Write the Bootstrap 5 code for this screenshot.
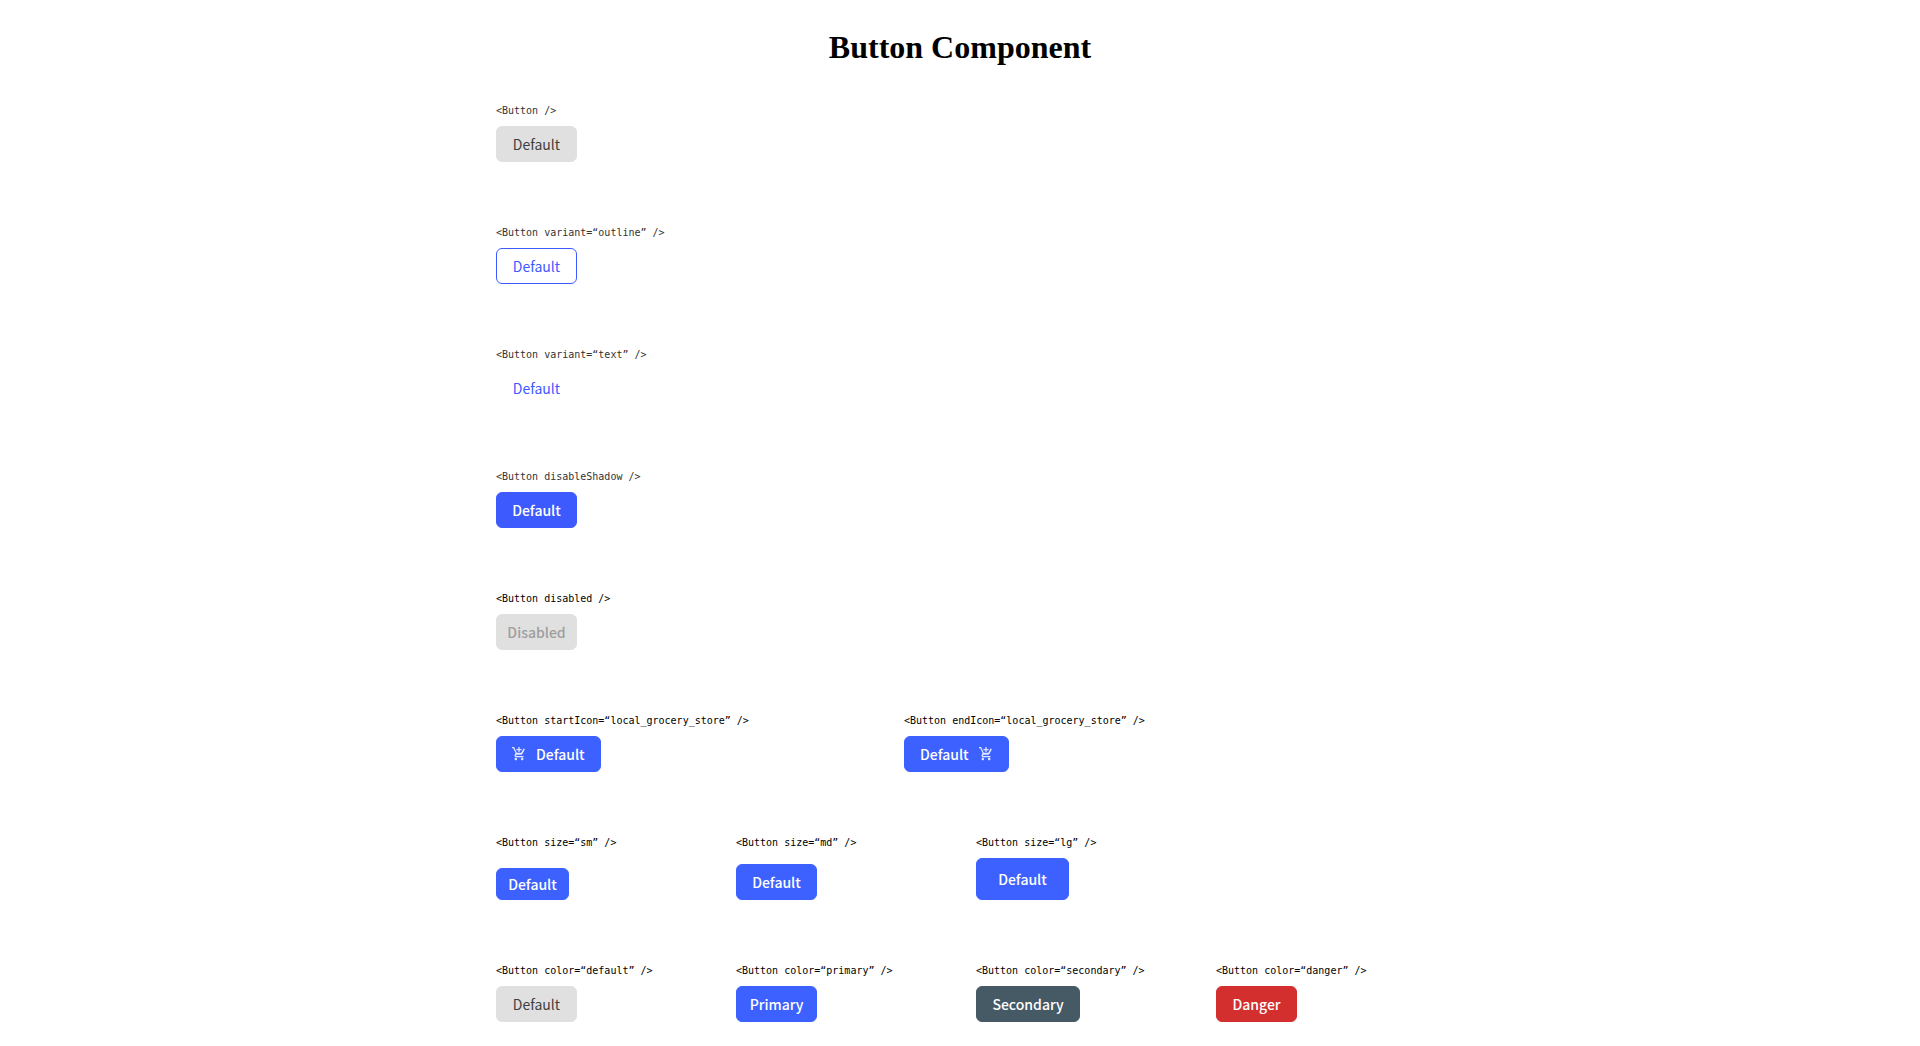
<!DOCTYPE html>
<html lang="en">
<head>
<meta charset="utf-8">
<meta name="viewport" content="width=device-width, initial-scale=1">
<title>Button Component</title>
<link href="https://cdn.jsdelivr.net/npm/bootstrap@5.3.0/dist/css/bootstrap.min.css" rel="stylesheet">
<style>
body { background: #fff; color: #000; }
.page-title { font: 700 32px/36px "Liberation Serif", serif; color: #000; padding: 29px 0 38px; }
.showcase { max-width: 960px; padding: 0 16px 16px; gap: 63px; }
.demo-row { column-gap: 32px; row-gap: 32px; }
.demo { width: 208px; gap: 7px; }
.demo-wide { width: 376px; }
.snippet { font: 10px/16px "DejaVu Sans Mono", monospace; color: #000; white-space: nowrap; }
.snippet-soft { color: #333; }
.ui-btn {
  --bs-btn-font-family: "Noto Sans CJK KR", "Noto Sans CJK JP", sans-serif;
  --bs-btn-font-size: 14px; --bs-btn-font-weight: 400; --bs-btn-line-height: 20px;
  --bs-btn-padding-x: 10px; --bs-btn-padding-y: 7px; --bs-btn-border-radius: 6px;
  --bs-btn-color: #3f3f3f; --bs-btn-bg: #e0e0e0; --bs-btn-border-color: #e0e0e0;
  --bs-btn-hover-color: #3f3f3f; --bs-btn-hover-bg: #aeaeae; --bs-btn-hover-border-color: #aeaeae;
  --bs-btn-disabled-color: #9e9e9e; --bs-btn-disabled-bg: #e0e0e0; --bs-btn-disabled-border-color: #e0e0e0; --bs-btn-disabled-opacity: 1;
  min-width: 81px;
}
.ui-btn:disabled, .ui-flat, .ui-primary, .ui-secondary, .ui-danger { --bs-btn-font-weight: 500; }
.ui-outline { --bs-btn-color: #3d5afe; --bs-btn-bg: #fff; --bs-btn-border-color: #3d5afe; --bs-btn-hover-color: #3d5afe; --bs-btn-hover-bg: #eceffe; }
.ui-text { --bs-btn-color: #3d5afe; --bs-btn-bg: transparent; --bs-btn-border-color: transparent; --bs-btn-hover-color: #3d5afe; --bs-btn-hover-bg: #eceffe; }
.ui-flat { --bs-btn-color: #fff; --bs-btn-bg: #3d5afe; --bs-btn-border-color: #3d5afe; --bs-btn-hover-color: #fff; --bs-btn-hover-bg: #0039cb; }
.ui-primary { --bs-btn-color: #fff; --bs-btn-bg: #3d61ff; --bs-btn-border-color: #3d61ff; --bs-btn-hover-color: #fff; --bs-btn-hover-bg: #0039cb; }
.ui-secondary { --bs-btn-color: #fff; --bs-btn-bg: #455a64; --bs-btn-border-color: #455a64; --bs-btn-hover-color: #fff; --bs-btn-hover-bg: #1c313a; min-width: 104px; }
.ui-danger { --bs-btn-color: #fff; --bs-btn-bg: #d32f2f; --bs-btn-border-color: #d32f2f; --bs-btn-hover-color: #fff; --bs-btn-hover-bg: #9a0007; }
.ui-sm { --bs-btn-padding-y: 5px; min-width: 73px; }
.ui-lg { --bs-btn-padding-y: 10px; min-width: 93px; }
.ui-icon { --bs-btn-padding-x: 15px; gap: 10px; }
.cart { width: 14px; height: 14px; fill: #fff; opacity: .85; }
</style>
<script defer src="https://cdn.jsdelivr.net/npm/bootstrap@5.3.0/dist/js/bootstrap.bundle.min.js"></script>
</head>
<body>
<h1 class="page-title text-center m-0">Button Component</h1>
<main class="showcase d-flex flex-column mx-auto">
  <section class="demo-row d-flex flex-wrap">
    <div class="demo d-flex flex-column align-items-start"><span class="snippet snippet-soft">&lt;Button /&gt;</span><button type="button" class="btn ui-btn">Default</button></div>
  </section>
  <section class="demo-row d-flex flex-wrap">
    <div class="demo d-flex flex-column align-items-start"><span class="snippet snippet-soft">&lt;Button variant=“outline” /&gt;</span><button type="button" class="btn ui-btn ui-outline">Default</button></div>
  </section>
  <section class="demo-row d-flex flex-wrap">
    <div class="demo d-flex flex-column align-items-start"><span class="snippet snippet-soft">&lt;Button variant=“text” /&gt;</span><button type="button" class="btn ui-btn ui-text">Default</button></div>
  </section>
  <section class="demo-row d-flex flex-wrap">
    <div class="demo d-flex flex-column align-items-start"><span class="snippet snippet-soft">&lt;Button disableShadow /&gt;</span><button type="button" class="btn ui-btn ui-flat">Default</button></div>
  </section>
  <section class="demo-row d-flex flex-wrap">
    <div class="demo d-flex flex-column align-items-start"><span class="snippet">&lt;Button disabled /&gt;</span><button type="button" class="btn ui-btn" disabled>Disabled</button></div>
  </section>
  <section class="demo-row d-flex flex-wrap">
    <div class="demo demo-wide d-flex flex-column align-items-start"><span class="snippet">&lt;Button startIcon=“local_grocery_store” /&gt;</span><button type="button" class="btn ui-btn ui-primary ui-icon d-inline-flex align-items-center"><svg class="cart" viewBox="1 1 22 22" aria-hidden="true"><path d="M11 9h2V6h3V4h-3V1h-2v3H8v2h3v3zm-4 9c-1.100 0-1.990.9-1.990 2S5.900 22 7 22s2-.9 2-2-.9-2-2-2zm10 0c-1.100 0-1.990.9-1.990 2s.89 2 1.990 2 2-.9 2-2-.9-2-2-2zm-8.900-5h7.450c.75 0 1.410-.41 1.750-1.030l3.860-7.010L19.420 3l-3.870 7H8.530L4.270 1H1v2h2l3.600 7.590-1.350 2.440C4.520 15.370 5.480 17 7 17h12v-2H7l1.100-2z"/></svg>Default</button></div>
    <div class="demo demo-wide d-flex flex-column align-items-start"><span class="snippet">&lt;Button endIcon=“local_grocery_store” /&gt;</span><button type="button" class="btn ui-btn ui-primary ui-icon d-inline-flex align-items-center">Default<svg class="cart" viewBox="1 1 22 22" aria-hidden="true"><path d="M11 9h2V6h3V4h-3V1h-2v3H8v2h3v3zm-4 9c-1.100 0-1.990.9-1.990 2S5.900 22 7 22s2-.9 2-2-.9-2-2-2zm10 0c-1.100 0-1.990.9-1.990 2s.89 2 1.990 2 2-.9 2-2-.9-2-2-2zm-8.900-5h7.450c.75 0 1.410-.41 1.750-1.030l3.860-7.010L19.420 3l-3.870 7H8.530L4.270 1H1v2h2l3.600 7.590-1.350 2.440C4.520 15.370 5.480 17 7 17h12v-2H7l1.100-2z"/></svg></button></div>
  </section>
  <section class="demo-row d-flex flex-wrap">
    <div class="demo d-flex flex-column align-items-start justify-content-between"><span class="snippet">&lt;Button size=“sm” /&gt;</span><button type="button" class="btn ui-btn ui-primary ui-sm">Default</button></div>
    <div class="demo d-flex flex-column align-items-start justify-content-between"><span class="snippet">&lt;Button size=“md” /&gt;</span><button type="button" class="btn ui-btn ui-primary">Default</button></div>
    <div class="demo d-flex flex-column align-items-start justify-content-between"><span class="snippet">&lt;Button size=“lg” /&gt;</span><button type="button" class="btn ui-btn ui-primary ui-lg">Default</button></div>
  </section>
  <section class="demo-row d-flex flex-wrap">
    <div class="demo d-flex flex-column align-items-start"><span class="snippet">&lt;Button color=“default” /&gt;</span><button type="button" class="btn ui-btn">Default</button></div>
    <div class="demo d-flex flex-column align-items-start"><span class="snippet">&lt;Button color=“primary” /&gt;</span><button type="button" class="btn ui-btn ui-primary">Primary</button></div>
    <div class="demo d-flex flex-column align-items-start"><span class="snippet">&lt;Button color=“secondary” /&gt;</span><button type="button" class="btn ui-btn ui-secondary">Secondary</button></div>
    <div class="demo d-flex flex-column align-items-start"><span class="snippet">&lt;Button color=“danger” /&gt;</span><button type="button" class="btn ui-btn ui-danger">Danger</button></div>
  </section>
</main>
</body>
</html>
